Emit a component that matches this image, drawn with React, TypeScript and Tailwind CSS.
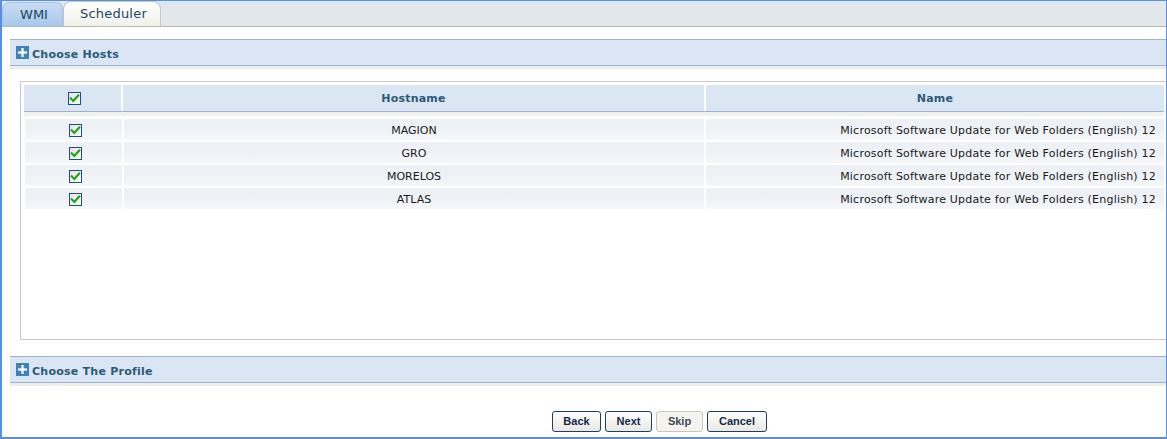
import React from "react";

const Check = () => (
  <span className="inline-flex w-[13px] h-[13px] border border-[#1f4f80] bg-gradient-to-br from-[#e6e6de] to-[#fbfbf8] items-center justify-center">
    <svg width="11" height="11" viewBox="0 0 11 11">
      <path d="M1.8 5.4 L4.3 8 L9.2 2.6" fill="none" stroke="#1ea21e" strokeWidth="2.2" strokeLinecap="square" />
    </svg>
  </span>
);

const Plus = () => (
  <svg width="13" height="13" viewBox="0 0 13 13" className="shrink-0">
    <rect x="0" y="0" width="13" height="13" fill="#3f82ba" />
    <rect x="5.4" y="2" width="2.2" height="9" fill="#ffffff" />
    <rect x="2" y="5.4" width="9" height="2.2" fill="#ffffff" />
  </svg>
);

const Section = ({ title }: { title: string }) => (
  <div className="ml-[8px]">
    <div className="h-[27px] border-y border-[#9db3d3] bg-[#dbe6f4] flex items-center pl-[6px] gap-[3px]">
      <Plus />
      <span className="font-bold text-[11px] text-[#2b5b79] leading-none pt-[3px] tracking-[0.25px]" style={{ fontFamily: '"DejaVu Sans", Verdana, sans-serif' }}>
        {title}
      </span>
    </div>
    <div className="h-[3px] bg-[#eef0e8]" />
  </div>
);

const hosts = ["MAGION", "GRO", "MORELOS", "ATLAS"];

const Btn = ({ label, w, disabled }: { label: string; w: string; disabled?: boolean }) => (
  <button
    className={`${w} h-[21px] rounded-[3px] border text-[11px] font-bold leading-none flex items-center justify-center ${
      disabled
        ? "border-[#c9c6bb] bg-[#f4f3ee] text-[#3b4a5a]"
        : "border-[#1d3d6b] bg-gradient-to-b from-[#ffffff] to-[#e9e8e1] text-[#14284a]"
    }`}
    style={{ fontFamily: '"Liberation Sans", Arial, sans-serif' }}
  >
    {label}
  </button>
);

export default function App() {
  const font = { fontFamily: '"DejaVu Sans", Verdana, sans-serif' };
  return (
    <div className="w-[1167px] h-[439px] border-t border-r border-b-2 border-l-2 border-[#5b8edb] bg-white flex flex-col overflow-hidden" style={font}>
      {/* tab bar */}
      <div className="h-[26px] shrink-0 bg-[#e2e7eb] border-b border-[#b3bbb3] flex items-end">
        <div className="w-[61px] h-[24px] rounded-t-[7px] border border-b-0 border-[#a9c4e2] bg-gradient-to-b from-[#c9ddf3] to-[#a9c7ea] flex items-center justify-center pl-[3px] text-[13px] text-[#1b4662]">
          WMI
        </div>
        <div className="w-[98px] h-[25px] rounded-t-[8px] border border-b-0 border-[#c2c7c7] bg-gradient-to-b from-[#ffffff] to-[#f1f1ea] flex items-center justify-center pl-[3px] tracking-[0.2px] text-[13px] text-[#1b4662]">
          Scheduler
        </div>
      </div>

      <div className="mt-[12px]">
        <Section title="Choose Hosts" />
      </div>

      {/* table box */}
      <div className="mt-[12px] ml-[18px] h-[259px] shrink-0 border-y border-l border-[#c9c9c9] pt-[3px] pl-[3px] pr-[2px]">
        <div className="h-[27px] border-b border-[#9db1d1] bg-[#dbe6f4] flex text-[11px] font-bold text-[#2b5b79] tracking-[0.2px]">
          <div className="w-[99px] border-r-2 border-white flex items-center justify-center pl-[3px]">
            <Check />
          </div>
          <div className="w-[583px] border-r-2 border-white flex items-center justify-center pt-[3px]">Hostname</div>
          <div className="flex-1 flex items-center justify-center pt-[3px]">Name</div>
        </div>
        <div className="h-[4px] bg-[#f0f2ec]" />
        <div className="mt-[3px] flex flex-col gap-[2px] pl-[1px]">
          {hosts.map((h) => (
            <div key={h} className="h-[21px] flex gap-[2px] text-[11px] text-[#1a1a1a]">
              <div className="w-[97px] bg-gradient-to-b from-[#edf1f5] via-[#eef2f6] to-[#f5f7f9] flex items-center justify-center pt-[1px] pl-[3px]">
                <Check />
              </div>
              <div className="w-[580px] bg-gradient-to-b from-[#edf1f5] via-[#eef2f6] to-[#f5f7f9] flex items-center justify-center pt-[3px]">{h}</div>
              <div className="flex-1 bg-gradient-to-b from-[#edf1f5] via-[#eef2f6] to-[#f5f7f9] flex items-center justify-end pr-[8px] pt-[3px] tracking-[0.22px]">
                Microsoft Software Update for Web Folders (English) 12
              </div>
            </div>
          ))}
        </div>
      </div>

      <div className="mt-[16px]">
        <Section title="Choose The Profile" />
      </div>

      <div className="mt-[25px] pl-[550px] flex gap-[4px]">
        <Btn label="Back" w="w-[49px]" />
        <Btn label="Next" w="w-[47px]" />
        <Btn label="Skip" w="w-[47px]" disabled />
        <Btn label="Cancel" w="w-[60px]" />
      </div>
    </div>
  );
}
